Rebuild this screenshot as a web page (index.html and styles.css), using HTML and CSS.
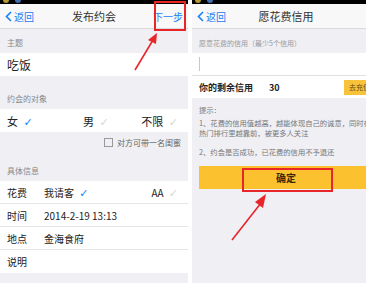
FILE: index.html
```html
<!DOCTYPE html>
<html>
<head>
    <title>发布约会</title>
    <link rel="stylesheet" href="styles.css">
</head>
<body>
    <div class="page">
        <!-- 左边：发布约会 -->
        <div class="screen">
            <div class="status">
                <span class="dot dot-yellow"></span>
                <span class="dot dot-blue"></span>
                <span class="bar-icons"></span>
            </div>
            <div class="nav">
                <span class="back">
                    <svg width="7" height="11" viewBox="0 0 7 11"><polyline points="6,1 1.5,5.5 6,10" fill="none" stroke="#1a7ef5" stroke-width="1.6"/></svg>
                    返回
                </span>
                <span class="nav-title">发布约会</span>
                <span class="next">下一步</span>
            </div>

            <div class="group-label first">主题</div>
            <div class="row"><span class="big">吃饭</span></div>

            <div class="group-label">约会的对象</div>
            <div class="row choices">
                <span class="choice c1">女 <span class="check on">✓</span></span>
                <span class="choice c2">男 <span class="check">✓</span></span>
                <span class="choice c3">不限 <span class="check">✓</span></span>
            </div>
            <div class="extra">
                <span class="box"></span>对方可带一名闺蜜
            </div>

            <div class="group-label">具体信息</div>
            <div class="details">
                <div class="row line">
                    <span class="key">花费</span>
                    <span class="val">我请客 <span class="check on">✓</span></span>
                    <span class="aa">AA <span class="check">✓</span></span>
                </div>
                <div class="row line">
                    <span class="key">时间</span>
                    <span class="val">2014-2-19 13:13</span>
                </div>
                <div class="row line">
                    <span class="key">地点</span>
                    <span class="val">金海食府</span>
                </div>
                <div class="row">
                    <span class="key">说明</span>
                </div>
            </div>

            <div class="mark mark-next"></div>
            <svg class="arrow arrow-left" width="40" height="50" viewBox="0 0 40 50">
                <line x1="3" y1="42" x2="21" y2="12" stroke="#e8262a" stroke-width="1.6"/>
                <polygon points="25,5 16,12 24,16" fill="#e8262a"/>
            </svg>
        </div>

        <!-- 右边：愿花费信用 -->
        <div class="screen">
            <div class="status">
                <span class="dot dot-yellow"></span>
                <span class="dot dot-blue"></span>
            </div>
            <div class="nav">
                <span class="back">
                    <svg width="7" height="11" viewBox="0 0 7 11"><polyline points="6,1 1.5,5.5 6,10" fill="none" stroke="#1a7ef5" stroke-width="1.6"/></svg>
                    返回
                </span>
                <span class="nav-title">愿花费信用</span>
            </div>

            <div class="group-label first small">愿意花费的信用（最少5个信用）</div>
            <div class="row input"><span class="caret"></span></div>
            <div class="row credit">
                <span class="credit-text">你的剩余信用</span>
                <span class="credit-num">30</span>
                <span class="recharge">去充值</span>
            </div>

            <div class="tips">
                <p>提示：</p>
                <p>1、花费的信用值越高，越能体现自己的诚意，同时在<br>热门排行里越靠前，被更多人关注</p>
                <p>2、约会是否成功，已花费的信用不予退还</p>
            </div>

            <div class="ok">确定</div>

            <div class="mark mark-ok"></div>
            <svg class="arrow arrow-right" width="50" height="56" viewBox="0 0 50 56">
                <line x1="4" y1="50" x2="33" y2="13" stroke="#e8262a" stroke-width="1.6"/>
                <polygon points="38,4 27,12 35,18" fill="#e8262a"/>
            </svg>
        </div>
    </div>
</body>
</html>
```

FILE: styles.css
```css
body {
    margin: 0;
    background-color: #fff;
    font-family: "Noto Sans CJK SC", "Noto Sans", sans-serif;
    overflow: hidden;
}

.page {
    display: flex;
    gap: 4px;
    width: 366px;
    height: 283px;
    overflow: hidden;
}

.screen {
    position: relative;
    flex-shrink: 0;
    width: 188px;
    height: 283px;
    background-color: #efeff4;
    overflow: hidden;
}

.status {
    height: 4px;
    background-color: #000;
    display: flex;
    align-items: flex-end;
    gap: 6px;
    padding-left: 3px;
    overflow: hidden;
}

.dot {
    width: 6px;
    height: 6px;
    border-radius: 50%;
    margin-bottom: 1px;
}

.dot-yellow {
    background-color: #b49a2c;
}

.dot-blue {
    background-color: #3f6ea8;
}

.bar-icons {
    margin-left: auto;
    margin-right: 4px;
    width: 30px;
    height: 2px;
    margin-bottom: 1px;
    background-color: #555;
}

.nav {
    height: 24px;
    background-color: #f8f8f8;
    border-bottom: 1px solid #d9d9dc;
    display: flex;
    align-items: center;
    padding: 0 4px 0 5px;
    position: relative;
}

.back {
    display: flex;
    align-items: center;
    gap: 2px;
    color: #1a7ef5;
    font-size: 10px;
}

.nav-title {
    position: absolute;
    left: 0;
    right: 0;
    text-align: center;
    font-size: 11px;
    color: #333;
    pointer-events: none;
}

.next {
    margin-left: auto;
    color: #1a7ef5;
    font-size: 10px;
    margin-right: 1px;
}

.group-label {
    height: 12px;
    line-height: 12px;
    font-size: 8px;
    color: #888;
    padding: 0 7px;
    margin-top: 17px;
    margin-bottom: 4px;
}

.group-label.first {
    margin-top: 8px;
}

.group-label.small {
    font-size: 7px;
    color: #999;
}

.row {
    height: 23px;
    background-color: #fff;
    display: flex;
    align-items: center;
    padding: 0 7px;
    font-size: 11px;
    color: #222;
    box-sizing: border-box;
}

.row.line {
    border-bottom: 1px solid #e6e6e6;
}

.big {
    font-size: 12px;
}

.check {
    color: #d6d6d6;
    font-size: 11px;
    margin-left: 3px;
    font-family: "DejaVu Sans", sans-serif;
}

.check.on {
    color: #1a7ef5;
}

.choice.c1 {
    width: 76px;
}

.choice.c2 {
    flex: 1;
}

.choice.c3 {
    margin-right: 3px;
}

.extra {
    height: 12px;
    margin-top: 4px;
    display: flex;
    align-items: center;
    justify-content: flex-end;
    padding-right: 7px;
    font-size: 8px;
    color: #666;
}

.box {
    width: 7px;
    height: 7px;
    border: 1px solid #999;
    margin-right: 4px;
}

.details .row {
    font-size: 10px;
}

.key {
    width: 37px;
}

.val {
    flex: 1;
}

.aa {
    margin-right: 3px;
}

.input {
    border-bottom: 1px solid #e0e0e0;
}

.caret {
    width: 1px;
    height: 14px;
    background-color: #c8c8c8;
}

.credit {
    height: 22px;
    font-weight: bold;
    font-size: 9px;
}

.credit-num {
    margin-left: 16px;
}

.recharge {
    margin-left: auto;
    margin-right: -2px;
    background-color: #f8c23a;
    color: #6b4a12;
    font-size: 7px;
    font-weight: normal;
    padding: 0 5px;
    height: 15px;
    line-height: 15px;
}

.tips {
    padding: 7px 0 0 7px;
    font-size: 7.3px;
    color: #777;
    white-space: nowrap;
}

.tips p {
    margin: 0 0 9px;
    line-height: 10px;
}

.tips p:first-child {
    margin-bottom: 3px;
}

.ok {
    margin: 0 7px;
    height: 23px;
    line-height: 23px;
    background-color: #fbc12f;
    text-align: center;
    font-size: 10px;
    font-weight: bold;
    color: #3a2a08;
}

.mark {
    position: absolute;
    border: 2px solid #e8262a;
    box-sizing: border-box;
}

.mark-next {
    left: 154px;
    top: 1px;
    width: 32px;
    height: 30px;
}

.mark-ok {
    left: 50px;
    top: 168px;
    width: 91px;
    height: 24px;
}

.arrow {
    position: absolute;
}

.arrow-left {
    left: 132px;
    top: 28px;
}

.arrow-right {
    left: 36px;
    top: 190px;
}
```
